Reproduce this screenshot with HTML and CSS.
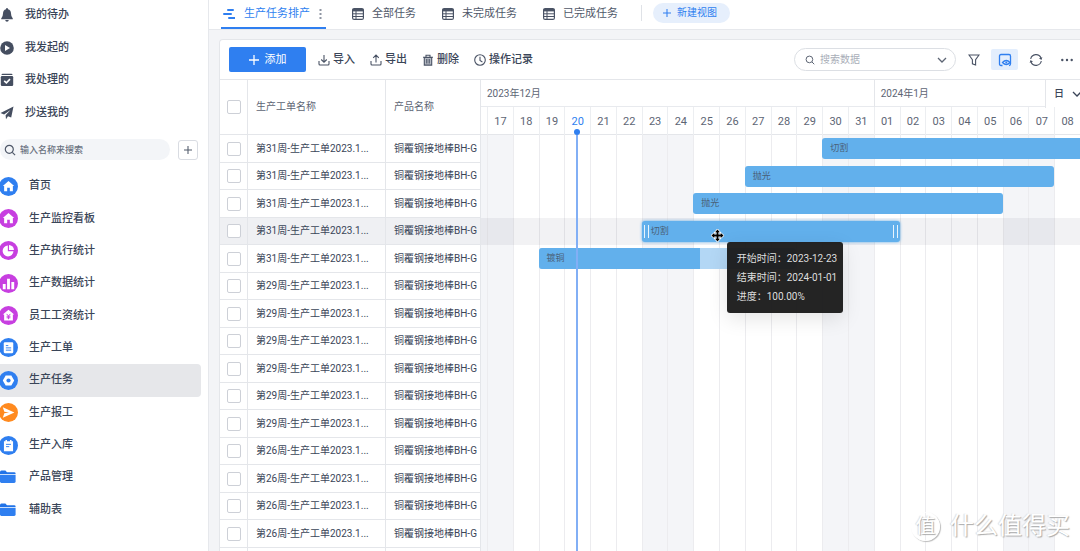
FILE: index.html
```html
<!DOCTYPE html>
<html lang="zh-CN">
<head>
<meta charset="utf-8">
<meta name="viewport" content="width=device-width, initial-scale=1">
<title>生产任务排产</title>
<link rel="stylesheet" href="styles.css">
</head>
<body>
<svg class="sprite" aria-hidden="true">
  <symbol id="i-list" viewBox="0 0 12 12"><rect x=".6" y=".6" width="10.800" height="10.800" rx="1.500" fill="#fff" stroke="#4a5365" stroke-width="1.200"/><path d="M.6 1h10.800v2.400H.6z" fill="#4a5365"/><path d="M.6 5.800h10.800M.6 8.500h10.800M4 3v8.400" stroke="#4a5365" fill="none"/></symbol>
  <symbol id="i-plus" viewBox="0 0 10 10"><path d="M5 0v10M0 5h10" stroke="currentColor" stroke-width="1.3" fill="none"/></symbol>
  <symbol id="i-search" viewBox="0 0 12 12"><g fill="none" stroke="currentColor" stroke-width="1.2"><circle cx="5.3" cy="5.3" r="4"/><path d="M8.3 8.3l2.8 2.8"/></g></symbol>
  <symbol id="i-down" viewBox="0 0 10 10"><path d="M1 3l4 4 4-4" fill="none" stroke="currentColor" stroke-width="1.3"/></symbol>
  <symbol id="i-folder" viewBox="0 0 16 14"><path d="M0 2.2Q0 .6 1.4.6H5.4L7 2.2H14.2Q15.6 2.2 15.6 3.4V4H0Z" fill="#2173e8"/><path d="M0 4.8H15.6V11.6Q15.6 13 14.2 13H1.4Q0 13 0 11.6Z" fill="#2f7ff0"/></symbol>
</svg>
<div class="app">
  <aside class="sidebar">
    <nav class="quick">
      <a href="#"><svg class="ico" viewBox="0 0 14 14"><path d="M7 0q1 0 1 1.2Q11 2 11 5.5q0 3 1.8 5v.8H1.2v-.8Q3 8.500 3 5.500 3 2 6 1.200 6 0 7 0ZM5.200 12.100h3.600Q8.600 13.700 7 13.700T5.200 12.100Z"/></svg>我的待办</a>
      <a href="#"><svg class="ico" viewBox="0 0 14 14"><circle cx="7" cy="7" r="6.800"/><path d="M5 4l5 3-5 3z" fill="#fff"/></svg>我发起的</a>
      <a href="#"><svg class="ico" viewBox="0 0 14 14"><path d="M2.500.8h9q.9 0 1 1.300h-11q.1-1.300 1-1.300Z"/><rect x=".8" y="3" width="12.400" height="10" rx="1.200"/><path d="M4.200 7.800l2.200 2.100 3.600-3.800" fill="none" stroke="#fff" stroke-width="1.600"/></svg>我处理的</a>
      <a href="#"><svg class="ico" viewBox="0 0 14 14"><path d="M13.500.5L.5 7l3.600 1.500L10.500 4 5.600 9.200 6 13.300 8 10.300 11.200 11.500Z"/></svg>抄送我的</a>
    </nav>
    <div class="finder">
      <label class="finder-box"><svg class="s12"><use href="#i-search"/></svg><input type="search" placeholder="输入名称来搜索" aria-label="输入名称来搜索"></label>
      <button class="plus" aria-label="新建"><svg class="s8"><use href="#i-plus"/></svg></button>
    </div>
    <nav class="menu">
      <a href="#"><svg class="dot blue" viewBox="0 0 20 20"><circle cx="10" cy="10" r="10"/><path d="M10 4.200L4 9.600h1.400V15h3.200v-3.600h2.800V15h3.200V9.600H16Z" fill="#fff"/></svg>首页</a>
      <a href="#"><svg class="dot purple" viewBox="0 0 20 20"><circle cx="10" cy="10" r="10"/><path d="M10 4.200L4 9.600h1.400V15h3.200v-3.600h2.800V15h3.200V9.600H16Z" fill="#fff"/></svg>生产监控看板</a>
      <a href="#"><svg class="dot purple" viewBox="0 0 20 20"><circle cx="10" cy="10" r="10"/><path d="M9.300 4.800V10.700h5.900A5.700 5.700 0 1 1 9.300 4.800Z" fill="#fff"/><path d="M10.500 4.200A5.300 5.300 0 0 1 15.700 9.500H10.500Z" fill="#fff"/></svg>生产执行统计</a>
      <a href="#"><svg class="dot purple" viewBox="0 0 20 20"><circle cx="10" cy="10" r="10"/><path d="M4 10.500h3V16H4zM8.500 5h3v11h-3zM13 8.500h3V16h-3z" fill="#fff"/></svg>生产数据统计</a>
      <a href="#"><svg class="dot purple" viewBox="0 0 20 20"><circle cx="10" cy="10" r="10"/><path d="M10 4L4 9h1.400v6.200h9.200V9H16Z" fill="#fff"/><path d="M8 8.300l2 2.200 2-2.200M10 10.500v3.400M8 10.800h4M8 12.400h4" stroke="#c73fe0" fill="none"/></svg>员工工资统计</a>
      <a href="#"><svg class="dot blue" viewBox="0 0 20 20"><circle cx="10" cy="10" r="10"/><rect x="5" y="4.500" width="10" height="11.500" rx="1.200" fill="#fff"/><path d="M7.200 8h2.600M7.200 10.400h5.600M7.200 12.800h5.600" stroke="#2f7ff0" fill="none"/></svg>生产工单</a>
      <a href="#" class="on" aria-current="page"><svg class="dot blue" viewBox="0 0 20 20"><circle cx="10" cy="10" r="10"/><path d="M7 4.800h6L16 10l-3 5.200H7L4 10Z" fill="#fff"/><circle cx="10" cy="10" r="2.200"/></svg>生产任务</a>
      <a href="#"><svg class="dot orange" viewBox="0 0 20 20"><circle cx="10" cy="10" r="10"/><path d="M4 4.600L16.200 10 4 15.400l1.600-4.600 5-.8-5-.8Z" fill="#fff"/></svg>生产报工</a>
      <a href="#"><svg class="dot blue" viewBox="0 0 20 20"><circle cx="10" cy="10" r="10"/><path d="M5.200 5.400h1.600V4.200h1.600v1.200h3.200V4.200h1.600v1.200h1.600V16H5.200Z" fill="#fff"/><path d="M7.400 8.800h5.200M7.400 11.200h3.400" stroke="#2f7ff0" fill="none"/></svg>生产入库</a>
      <a href="#"><svg class="folder"><use href="#i-folder"/></svg>产品管理</a>
      <a href="#"><svg class="folder"><use href="#i-folder"/></svg>辅助表</a>
    </nav>
  </aside>

  <main class="main">
    <header class="tabs">
      <button class="tab active"><svg class="s12" viewBox="0 0 12 12"><path d="M5 2h5M1 6h7M6 10h5.500" stroke="#2f7ff0" stroke-width="2" stroke-linecap="round"/></svg><span>生产任务排产</span><svg class="more" viewBox="0 0 3 10"><path d="M.5 0h2v2h-2zM.5 4h2v2h-2zM.5 8h2v2h-2z" fill="#8f96a3"/></svg></button>
      <button class="tab"><svg class="s12"><use href="#i-list"/></svg><span>全部任务</span></button>
      <button class="tab"><svg class="s12"><use href="#i-list"/></svg><span>未完成任务</span></button>
      <button class="tab"><svg class="s12"><use href="#i-list"/></svg><span>已完成任务</span></button>
      <span class="sep"></span>
      <button class="new-view"><svg class="s8"><use href="#i-plus"/></svg>新建视图</button>
    </header>

    <section class="panel">
      <div class="toolbar">
        <button class="add"><svg class="s10"><use href="#i-plus"/></svg>添加</button>
        <button class="tool"><svg class="s12 line" viewBox="0 0 12 12"><path d="M6 1v7M3.200 5.500L6 8.200l2.800-2.700M1 7v3q0 1 1 1h8q1 0 1-1V7"/></svg>导入</button>
        <button class="tool"><svg class="s12 line" viewBox="0 0 12 12"><path d="M6 8.500v-7M3.200 3.800L6 1l2.800 2.800M1 7v3q0 1 1 1h8q1 0 1-1V7"/></svg>导出</button>
        <button class="tool"><svg class="s12 line" viewBox="0 0 12 12"><path d="M2.300 3.500h7.400v7.600H2.300Z" fill="#b4b9c2"/><path d="M1 3.200h10M4 3V1.200h4V3M4.800 5v4.500M7.200 5v4.500"/></svg>删除</button>
        <button class="tool"><svg class="s12 line" viewBox="0 0 12 12"><circle cx="6" cy="6" r="5.300"/><path d="M6 2.800V6.500L8.400 8"/></svg>操作记录</button>
        <label class="query"><svg class="s10"><use href="#i-search"/></svg><input type="search" placeholder="搜索数据" aria-label="搜索数据"><svg class="s10"><use href="#i-down"/></svg></label>
        <button class="icon-btn" aria-label="筛选"><svg class="s12 line" viewBox="0 0 12 12"><path d="M1 1h10L7.600 5.800V11L4.400 9.800V5.800Z"/></svg></button>
        <button class="icon-btn lit" aria-label="显示"><svg class="s14" viewBox="0 0 14 14"><g fill="none" stroke="#2f7ff0" stroke-width="1.300"><path d="M4.500 12.500H3q-1.500 0-1.500-1.500V3Q1.500 1.500 3 1.500h8q1.500 0 1.500 1.500v8q0 1.500-1.500 1.500"/><path d="M4.500 9.500Q8.200 5.500 12 9.500 8.200 13.500 4.500 9.500Z"/></g><circle cx="8.300" cy="9.500" r="1" fill="#2f7ff0"/></svg></button>
        <button class="icon-btn" aria-label="刷新"><svg class="s14 line" viewBox="0 0 14 14"><path d="M1.700 6A5.400 5.400 0 0 1 12 5M12.300 8A5.400 5.400 0 0 1 2 9"/><path d="M13.400 4.200L12.400 7 10 5.200ZM.6 9.800L1.600 7 4 8.800Z" fill="#4a5365" stroke="none"/></svg></button>
        <button class="icon-btn" aria-label="更多"><svg class="s12" viewBox="0 0 12 12"><g fill="#4a5365"><circle cx="1.300" cy="6" r="1.200"/><circle cx="6" cy="6" r="1.200"/><circle cx="10.700" cy="6" r="1.200"/></g></svg></button>
      </div>

      <div class="gantt">
        <table class="grid">
          <colgroup><col class="c-check"><col class="c-name"><col class="c-prod"></colgroup>
          <thead><tr><th><input type="checkbox" aria-label="全选"></th><th>生产工单名称</th><th>产品名称</th></tr></thead>
          <tbody>
            <tr><td><input type="checkbox" aria-label="选择第1行"></td><td>第31周-生产工单2023.1...</td><td>铜覆钢接地棒BH-G</td></tr>
            <tr><td><input type="checkbox" aria-label="选择第2行"></td><td>第31周-生产工单2023.1...</td><td>铜覆钢接地棒BH-G</td></tr>
            <tr><td><input type="checkbox" aria-label="选择第3行"></td><td>第31周-生产工单2023.1...</td><td>铜覆钢接地棒BH-G</td></tr>
            <tr class="hover"><td><input type="checkbox" aria-label="选择第4行"></td><td>第31周-生产工单2023.1...</td><td>铜覆钢接地棒BH-G</td></tr>
            <tr><td><input type="checkbox" aria-label="选择第5行"></td><td>第31周-生产工单2023.1...</td><td>铜覆钢接地棒BH-G</td></tr>
            <tr><td><input type="checkbox" aria-label="选择第6行"></td><td>第29周-生产工单2023.1...</td><td>铜覆钢接地棒BH-G</td></tr>
            <tr><td><input type="checkbox" aria-label="选择第7行"></td><td>第29周-生产工单2023.1...</td><td>铜覆钢接地棒BH-G</td></tr>
            <tr><td><input type="checkbox" aria-label="选择第8行"></td><td>第29周-生产工单2023.1...</td><td>铜覆钢接地棒BH-G</td></tr>
            <tr><td><input type="checkbox" aria-label="选择第9行"></td><td>第29周-生产工单2023.1...</td><td>铜覆钢接地棒BH-G</td></tr>
            <tr><td><input type="checkbox" aria-label="选择第10行"></td><td>第29周-生产工单2023.1...</td><td>铜覆钢接地棒BH-G</td></tr>
            <tr><td><input type="checkbox" aria-label="选择第11行"></td><td>第29周-生产工单2023.1...</td><td>铜覆钢接地棒BH-G</td></tr>
            <tr><td><input type="checkbox" aria-label="选择第12行"></td><td>第26周-生产工单2023.1...</td><td>铜覆钢接地棒BH-G</td></tr>
            <tr><td><input type="checkbox" aria-label="选择第13行"></td><td>第26周-生产工单2023.1...</td><td>铜覆钢接地棒BH-G</td></tr>
            <tr><td><input type="checkbox" aria-label="选择第14行"></td><td>第26周-生产工单2023.1...</td><td>铜覆钢接地棒BH-G</td></tr>
            <tr><td><input type="checkbox" aria-label="选择第15行"></td><td>第26周-生产工单2023.1...</td><td>铜覆钢接地棒BH-G</td></tr>
            <tr><td><input type="checkbox" aria-label="选择第16行"></td><td></td><td></td></tr>
          </tbody>
        </table>

        <div class="timeline">
          <div class="months cols">
            <span class="month dec">2023年12月</span>
            <span class="month jan">2024年1月</span>
            <label class="unit"><select aria-label="时间单位"><option>日</option></select><svg class="s10"><use href="#i-down"/></svg></label>
          </div>
          <div class="days cols">
            <span></span><span>17</span><span>18</span><span>19</span><span class="today">20</span><span>21</span><span>22</span><span>23</span><span>24</span><span>25</span><span>26</span><span>27</span><span>28</span><span>29</span><span>30</span><span>31</span><span>01</span><span>02</span><span>03</span><span>04</span><span>05</span><span>06</span><span>07</span><span>08</span>
          </div>
          <div class="chart">
            <div class="stripes cols">
              <i class="we"></i><i class="we"></i><i></i><i></i><i></i><i></i><i></i><i class="we"></i><i class="we"></i><i></i><i></i><i></i><i></i><i></i><i class="we"></i><i class="we"></i><i></i><i></i><i></i><i></i><i></i><i class="we"></i><i class="we"></i><i></i>
            </div>
            <div class="bars cols">
              <div class="row-hover"></div>
              <div class="bar b1">切割</div>
              <div class="bar b2">抛光</div>
              <div class="bar b3">抛光</div>
              <div class="bar b5"><span class="done" style="width:62.5%">镀铜</span></div>
              <div class="bar b4"><span class="grip"></span>切割<span class="grip end"></span>
                <div class="tip" role="tooltip"><p>开始时间：2023-12-23</p><p>结束时间：2024-01-01</p><p>进度：100.00%</p></div>
                <svg class="cursor" viewBox="0 0 14 14"><path d="M7 .5L9.600 3.500H8V6h2.500V4.400L13.500 7l-3 2.600V8H8v2.500h1.600L7 13.500 4.400 10.500H6V8H3.500v1.600L.5 7l3-2.600V6H6V3.500H4.400Z" stroke="#fff" stroke-width="1.600" paint-order="stroke"/></svg>
              </div>
              <div class="now"></div>
            </div>
          </div>
        </div>
      </div>
    </section>
  </main>
  <div class="mark"><span class="mark-logo">值</span><span>什么值得买</span></div>
</div>
</body>
</html>
```

FILE: styles.css
```css
* { box-sizing: border-box; }

body {
  margin: 0;
  height: 100vh;
  overflow: hidden;
  font: 11px/16px Roboto, "Noto Sans CJK SC", sans-serif;
  color: #3a4558;
  background: #fff;
}

button, input, select { font: inherit; color: inherit; }
button { border: 0; padding: 0; background: none; display: flex; align-items: center; white-space: nowrap; }
a { color: inherit; text-decoration: none; }
svg { flex: none; display: block; }
p { margin: 0; }

.sprite { position: absolute; width: 0; height: 0; }
.s8 { width: 8px; height: 8px; }
.s10 { width: 10px; height: 10px; }
.s12 { width: 12px; height: 12px; }
.s14 { width: 14px; height: 14px; }
.line { fill: none; stroke: #4a5365; stroke-width: 1.1; }

.app { display: flex; height: 100%; position: relative; overflow: hidden; }

/* Sidebar */
.sidebar { width: 209px; flex: none; border-right: 1px solid #e6e8ec; font-weight: 500; margin-top: -1px; }
.quick, .menu { display: grid; grid-auto-rows: 1fr; }
.quick { height: 130px; }
.menu { height: 356px; }
.quick a, .menu a { display: flex; align-items: center; }
.quick a { gap: 11px; }
.ico { width: 14px; height: 14px; fill: #454e60; }
.menu a { gap: 11px; margin-right: 7px; border-radius: 0 4px 4px 0; }
.menu .on { background: #e6e7ea; }
.dot { width: 19px; height: 19px; margin-left: -1px; }
.blue { fill: #2f7ff0; }
.purple { fill: #c73fe0; }
.orange { fill: #ff8a1f; }
.folder { width: 16px; height: 14px; margin-right: 2px; }

.finder { display: flex; align-items: center; gap: 8px; height: 41px; }
.finder-box { display: flex; align-items: center; gap: 4px; width: 170px; height: 21px; padding-left: 4px; border-radius: 11px; background: #f3f5f8; color: #4f5869; }
.finder-box input { flex: 1; min-width: 0; padding: 0; border: 0; outline: 0; background: none; font-size: 9px; font-weight: 500; }
.finder-box input::placeholder { color: #697180; }
.plus { width: 20px; height: 20px; justify-content: center; border: 1px solid #d9dce2; border-radius: 3px; color: #4f5869; }

/* View tabs */
.main { flex: 1; min-width: 0; display: flex; flex-direction: column; background: #f3f4f7; }
.tabs { display: flex; align-items: center; height: 30px; padding-left: 12px; gap: 26px; flex: none; background: #fff; border-bottom: 1px solid #e6e8ec; }
.tab { gap: 8px; height: 29px; border-bottom: 2px solid transparent; color: #4f5869; }
.active { gap: 9px; padding-left: 2px; padding-right: 4px; border-color: #2f7ff0; color: #2f7ff0; }
.more { width: 3px; height: 10px; }
.sep { width: 1px; height: 16px; margin: 0 -15px 3px -3px; background: #dfe2e7; }
.new-view { gap: 6px; height: 20px; padding: 0 13px 0 10px; margin-bottom: 3px; border-radius: 10px; background: #e6effc; color: #2f7ff0; font-size: 10px; }

/* Panel and toolbar */
.panel { flex: 1; min-height: 0; margin: 9px 0 0 10px; border: 1px solid #e4e6ea; border-width: 1px 0 0 1px; border-radius: 4px 0 0 0; background: #fff; overflow: hidden; }
.toolbar { display: flex; align-items: center; height: 40px; padding: 0 8px 0 9px; border-bottom: 1px solid #e4e6ea; }
.add { justify-content: center; gap: 6px; width: 77px; height: 25px; margin-right: -3px; border-radius: 2px; background: #2f7ff0; color: #fff; }
.tool { gap: 3px; margin-left: 15px; font-weight: 500; }
.query { display: flex; align-items: center; gap: 5px; width: 162px; height: 23px; margin-left: auto; margin-right: 4px; padding: 0 8px 0 10px; border: 1px solid #dcdfe4; border-radius: 12px; color: #5d6574; }
.query input { flex: 1; min-width: 0; padding: 0; border: 0; outline: 0; background: none; font-size: 10px; }
.query input::placeholder { color: #a9aeb8; }
.icon-btn { justify-content: center; width: 27px; height: 21px; margin-right: 4px; border-radius: 2px; }
.icon-btn:last-child { margin-right: -8px; }
.lit { background: #e3eefd; }

/* Table */
.gantt { display: flex; }
.grid { flex: none; width: 261px; height: 495px; table-layout: fixed; border-collapse: separate; border-spacing: 0; font-size: 10px; }
.c-check { width: 28px; }
.c-name { width: 138px; }
.c-prod { width: 95px; }
.grid th, .grid td { padding: 0 0 0 8px; border-right: 1px solid #e4e6ea; border-bottom: 1px solid #e4e6ea; text-align: left; white-space: nowrap; overflow: hidden; line-height: 14px; }
.grid th:first-child, .grid td:first-child { padding-left: 7px; }
.grid th { height: 55px; font-weight: 400; color: #5d6574; }
.grid td { height: 27px; padding-top: 1px; }
.grid .hover td { background: #eff0f3; }
.grid input { appearance: none; display: block; width: 14px; height: 14px; margin: 0; border: 1px solid #cdd0d7; border-radius: 2px; background: #fff; }

/* Timeline */
.timeline { flex: 1; min-width: 0; }
.cols { display: grid; grid-template-columns: 6px repeat(23, minmax(0, 1fr)); }
.months { height: 27px; border-bottom: 1px solid #e8eaee; }
.month { grid-row: 1; padding-left: 6px; line-height: 28px; font-size: 10px; color: #5d6574; }
.dec { grid-column: 1 / 17; }
.jan { grid-column: 17 / -1; border-left: 1px solid #e4e6ea; }
.unit { grid-row: 1; grid-column: 22 / -1; justify-self: end; display: flex; align-items: center; gap: 8px; width: 35px; padding-left: 8px; border-left: 1px solid #e4e6ea; background: #fff; }
.unit select { appearance: none; width: 10px; padding: 0; border: 0; background: none; font-size: 10px; font-weight: 500; }
.days { height: 28px; border-bottom: 1px solid #e4e6ea; text-align: center; line-height: 29px; color: #5d6574; }
.days span + span { border-left: 1px solid #eceef1; }
.days .today { color: #2f7ff0; }

.chart { display: grid; height: 440px; }
.stripes, .bars { grid-area: 1 / 1; min-width: 0; }
.stripes i + i { border-left: 1px solid #ececef; }
.stripes .we { background: #f4f5f8; }
.bars { grid-template-rows: repeat(16, minmax(0, 1fr)); align-items: center; }
.row-hover { grid-area: 4 / 1 / 5 / -1; align-self: stretch; background: rgba(30, 30, 60, 0.06); }
.bar { height: 21px; padding-left: 8px; border-radius: 3px; background: #62b0ec; font-size: 9px; line-height: 21px; color: #4a6178; }
.b1 { grid-area: 1 / 15 / 2 / -1; border-radius: 3px 0 0 3px; }
.b2 { grid-area: 2 / 12 / 3 / 24; }
.b3 { grid-area: 3 / 10 / 4 / 22; }
.b5 { grid-area: 5 / 4 / 6 / 14; padding: 0; background: #b3d7f5; }
.b4 { grid-area: 4 / 8 / 5 / 18; display: flex; align-items: center; gap: 2px; padding: 0 2px; position: relative; z-index: 2; box-shadow: 0 0 3px #62b0ec; }
.done { display: block; padding-left: 8px; border-radius: 3px 0 0 3px; background: #62b0ec; }
.grip { width: 5px; height: 13px; border: 1px solid #e8f4fd; border-width: 0 1px; }
.end { margin-left: auto; }
.now { grid-area: 1 / 5 / -1 / 6; align-self: stretch; justify-self: center; position: relative; width: 2px; background: #82aff5; }
.now::before { content: ""; position: absolute; left: -2px; top: -6px; width: 6px; height: 6px; border-radius: 50%; background: #2f7ff0; }

.tip { position: absolute; left: 85px; top: 21px; padding: 7px 10px; width: 116px; border-radius: 3px; background: rgba(24, 24, 24, 0.95); color: #dedede; font-size: 10px; line-height: 19px; white-space: nowrap; box-shadow: 0 6px 20px rgba(0, 0, 0, 0.1); }
.cursor { position: absolute; left: 69px; top: 8px; width: 13px; height: 13px; }

/* Corner mark */
.mark { position: absolute; right: 10px; bottom: 9px; display: flex; align-items: center; gap: 10px; font-size: 24px; line-height: 32px; color: #fff; text-shadow: 1px 1px 1px #aaa, -1px 0 1px #ddd; }
.mark-logo { width: 29px; height: 29px; border: 1px solid #fff; border-radius: 50%; text-align: center; font-size: 20px; line-height: 26px; box-shadow: 1px 1px 1px #bbb; }
```
